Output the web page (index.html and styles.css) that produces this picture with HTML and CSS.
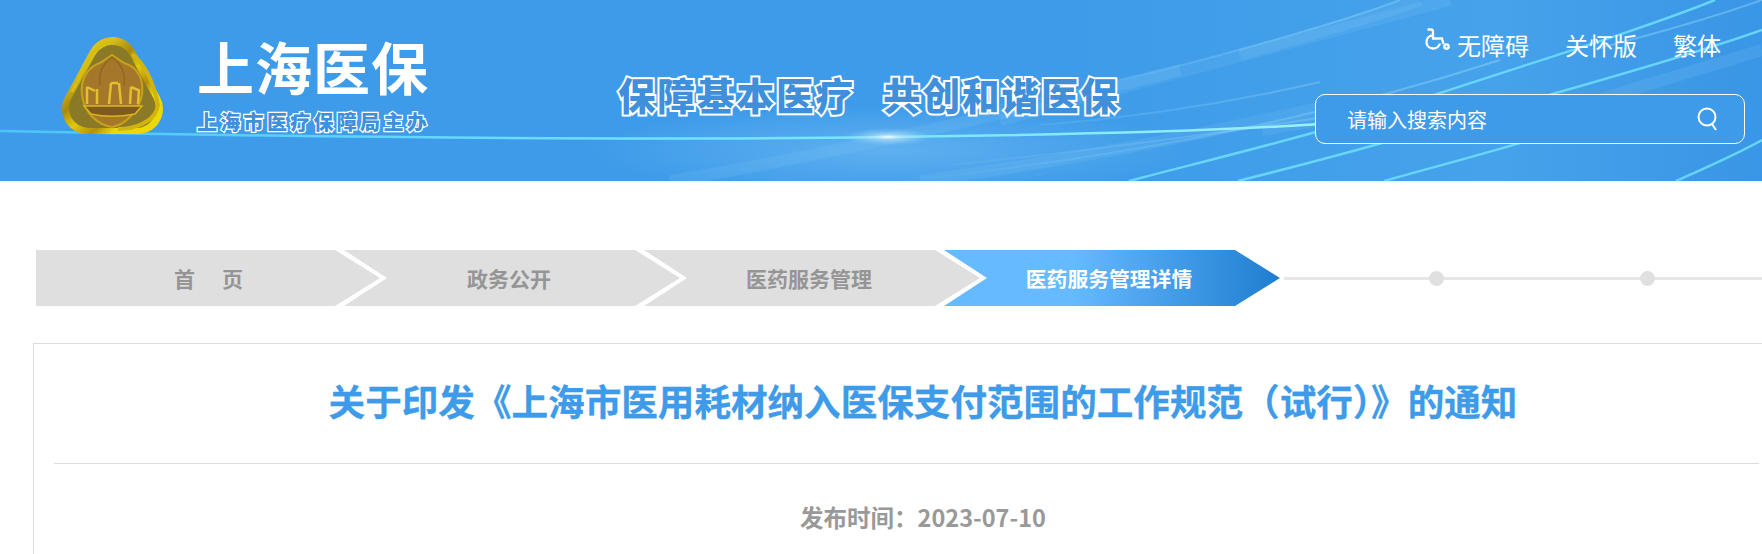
FILE: index.html
```html
<!DOCTYPE html>
<html lang="zh-CN">
<head>
    <meta charset="utf-8">
    <title>上海医保</title>
    <link rel="stylesheet" href="styles.css">
</head>
<body>

<div class="header">
    <svg class="streaks" viewBox="0 0 1762 181" preserveAspectRatio="none">
        <defs>
            <linearGradient id="sheen" x1="0" y1="0" x2="1" y2="0">
                <stop offset="0" stop-color="#3e9be9"/>
                <stop offset="0.6" stop-color="#3e9be9"/>
                <stop offset="0.85" stop-color="#46a2ea"/>
                <stop offset="1" stop-color="#3a96e6"/>
            </linearGradient>
            <radialGradient id="flare">
                <stop offset="0" stop-color="#fff" stop-opacity="0.95"/>
                <stop offset="0.25" stop-color="#cdeeff" stop-opacity="0.6"/>
                <stop offset="1" stop-color="#8fd0fa" stop-opacity="0"/>
            </radialGradient>
            <radialGradient id="haze">
                <stop offset="0" stop-color="#8fd0fa" stop-opacity="0.4"/>
                <stop offset="1" stop-color="#8fd0fa" stop-opacity="0"/>
            </radialGradient>
            <linearGradient id="beam" x1="0" y1="0" x2="1" y2="0">
                <stop offset="0" stop-color="#4cc4f7"/>
                <stop offset="0.5" stop-color="#6fe3ff"/>
                <stop offset="0.75" stop-color="#7ee8fb"/>
                <stop offset="1" stop-color="#9df0fb"/>
            </linearGradient>
            <linearGradient id="fade" gradientUnits="userSpaceOnUse" x1="850" y1="0" x2="1450" y2="0">
                <stop offset="0" stop-color="#a8e6fb" stop-opacity="0"/>
                <stop offset="1" stop-color="#a8e6fb" stop-opacity="1"/>
            </linearGradient>
        </defs>
        <rect width="1762" height="181" fill="url(#sheen)"/>
        <ellipse cx="888" cy="150" rx="300" ry="45" fill="url(#haze)"/>
        <path class="soft" d="M670 181 C800 160 960 125 1180 70"/>
        <path class="soft" d="M920 181 C1040 165 1180 140 1330 105"/>
        <path class="soft" d="M1000 120 C1150 80 1280 45 1450 0"/>
        <path class="soft" d="M1240 55 C1310 35 1370 18 1420 0"/>
        <path class="soft" d="M1500 130 C1580 105 1680 75 1762 50"/>
        <path class="soft" d="M1262 130 L1320 120"/>
        <path class="thin" d="M900 181 C1100 160 1300 125 1500 60"/>
        <path class="thin" d="M950 165 C1100 150 1280 125 1400 105"/>
        <path class="thin" d="M1000 105 C1120 85 1320 30 1400 0"/>
        <path class="thin" d="M1040 125 C1130 118 1220 105 1320 82"/>
        <path class="bright" d="M1129 181 C1190 165 1260 148 1330 128"/>
        <path class="bright" d="M1238 181 C1290 168 1340 155 1400 138"/>
        <path class="bright" d="M1384 181 C1430 168 1480 155 1530 140"/>
        <path class="bright" d="M1676 181 C1705 168 1735 155 1762 140"/>
        <path class="bright" d="M1549 95 C1620 75 1700 52 1762 30"/>
        <path class="bright" d="M1434 95 C1540 60 1640 30 1715 0"/>
        <path class="thin" d="M1600 48 C1650 35 1720 15 1762 0"/>
        <path d="M0 131 C300 137 600 141 888 137 C1060 135 1200 132 1320 124" stroke="url(#beam)" stroke-width="2.5" fill="none"/>
        <ellipse cx="888" cy="137" rx="46" ry="9" fill="url(#flare)"/>
    </svg>

    <svg class="logo" viewBox="0 0 101 97">
        <defs>
            <linearGradient id="gold" x1="0" y1="0" x2="1" y2="1">
                <stop offset="0" stop-color="#d9c21e"/>
                <stop offset="0.3" stop-color="#a98a0c"/>
                <stop offset="0.55" stop-color="#e3c80a"/>
                <stop offset="0.8" stop-color="#b58f10"/>
                <stop offset="1" stop-color="#ecd805"/>
            </linearGradient>
        </defs>
        <polygon points="50.5,25 25,72 76,72" fill="url(#gold)" stroke="url(#gold)" stroke-width="50" stroke-linejoin="round"/>
        <polygon points="50.5,28 27,71 74,71" fill="#8a7a28" stroke="#8a7a28" stroke-width="40" stroke-linejoin="round"/>
        <path d="M50 5 C38 5 32 14 26 24 L10 55" stroke="#d8bd12" stroke-width="3" fill="none"/>
        <path d="M70 17 C84 28 92 48 96 68 C94 84 74 92 56 92" stroke="#d2b40e" stroke-width="4" fill="none"/>
        <path d="M50 18 L62 26 C76 30 82 42 80 58 C76 76 62 88 50 90 C36 88 22 76 20 58 C18 42 26 30 38 26 Z" fill="#a5772a" stroke="#c9a019" stroke-width="2"/>
        <path d="M50 20 C58 26 64 34 62 48 M50 20 C42 26 36 34 38 48" stroke="#8d6420" stroke-width="1.2" fill="none"/>
        <g class="sails">
            <path d="M25 50 L25 67 M35 52 L35 67 M49 46 L47 67 M57 46 L59 67 M69 50 L68 67 M77 52 L76 67"/>
            <path d="M25 50 L33 54 M49 46 L56 46 M69 50 L76 53"/>
        </g>
        <path d="M22 69 L80 69 L73 77 C58 80 42 80 29 77 Z" fill="#7f5a1c" stroke="#d9b81d" stroke-width="1.5"/>
    </svg>

    <div class="brand">
        <div class="brand-name">上海医保</div>
        <div class="brand-sub">上海市医疗保障局主办</div>
    </div>

    <div class="slogan">
        <span>保障基本医疗</span>
        <span>共创和谐医保</span>
    </div>

    <div class="tools">
        <div class="tool-links">
            <a class="tool-link tool-access">
                <svg class="icon-access" viewBox="0 0 25 24">
                    <path d="M2.5 1.5 L6 1.5 C7.5 1.5 8 2.5 8 4 L8 10.5 L17 10.5 L18.5 16 M8 7.5 C4 7.5 1.5 10.5 1.5 14 C1.5 18 4.5 20.5 8 20.5 C11.5 20.5 14 18.5 15 15.5"/>
                    <circle cx="21.5" cy="18.5" r="2.2"/>
                </svg>
                无障碍
            </a>
            <a class="tool-link">关怀版</a>
            <a class="tool-link">繁体</a>
        </div>
        <div class="search">
            <span class="search-text">请输入搜索内容</span>
            <svg class="icon-search" viewBox="0 0 20 24">
                <circle cx="10" cy="10" r="8.5"/>
                <path d="M15 17 L19 23"/>
            </svg>
        </div>
    </div>
</div>

<div class="crumbs">
    <a class="crumb crumb-first">首　页</a>
    <a class="crumb">政务公开</a>
    <a class="crumb">医药服务管理</a>
    <a class="crumb crumb-active">医药服务管理详情</a>
    <div class="rail">
        <span class="rail-dot"></span>
        <span class="rail-dot"></span>
    </div>
</div>

<div class="card">
    <h1 class="card-title">关于印发《上海市医用耗材纳入医保支付范围的工作规范（试行）》的通知</h1>
    <div class="card-rule"></div>
    <div class="card-date">发布时间：2023-07-10</div>
</div>

</body>
</html>
```

FILE: styles.css
```css
html, body {
    margin: 0;
    height: 554px;
    overflow: hidden;
    background: #fff;
    font-family: "Noto Sans CJK SC", "Liberation Sans", sans-serif;
}

/* top banner */
.header {
    position: relative;
    display: flex;
    align-items: flex-start;
    height: 181px;
    padding-left: 62px;
    background: #3e9be9;
}

.streaks {
    position: absolute;
    left: 0;
    top: 0;
    width: 100%;
    height: 100%;
}

.streaks path {
    fill: none;
}

.streaks .soft {
    stroke: #8fd3f7;
    stroke-width: 12;
    opacity: 0.14;
}

.streaks .thin {
    stroke: url(#fade);
    stroke-width: 2;
    opacity: 0.35;
}

.streaks .bright {
    stroke: #6fe4fb;
    stroke-width: 2.5;
    opacity: 0.8;
}

.logo {
    position: relative;
    flex: none;
    width: 101px;
    height: 97px;
    margin-top: 37px;
}

.sails path {
    fill: none;
    stroke: #e0c030;
    stroke-width: 2.5;
}

.brand {
    position: relative;
    flex: none;
    width: 240px;
    margin: 25px 0 0 34px;
    color: #fff;
}

.brand-name {
    font-size: 57px;
    font-weight: 700;
    line-height: 80px;
    letter-spacing: 1px;
}

.brand-sub {
    margin-top: 4px;
    font-size: 20px;
    font-weight: 900;
    line-height: 26px;
    letter-spacing: 3.3px;
    color: #3f8fdb;
    -webkit-text-stroke: 2.5px #fff;
    paint-order: stroke fill;
}

.slogan {
    position: relative;
    flex: none;
    display: flex;
    gap: 28px;
    margin: 66px 0 0 181px;
    font-size: 37.5px;
    font-weight: 900;
    line-height: 56px;
    letter-spacing: 2px;
    color: #3f8fdb;
    -webkit-text-stroke: 4px #fff;
    paint-order: stroke fill;
    text-shadow: 0 0 3px rgba(255, 255, 255, 0.6);
}

/* links + search */
.tools {
    position: relative;
    margin-left: auto;
    padding: 26px 17px 0 0;
    width: 430px;
}

.tool-links {
    display: flex;
    justify-content: flex-end;
    align-items: center;
    gap: 36px;
    padding-right: 24px;
    height: 36px;
    color: #fff;
    font-size: 24px;
}

.tool-link {
    display: flex;
    align-items: center;
}

.icon-access {
    width: 25px;
    height: 24px;
    margin: -8px 7px 0 0;
    fill: none;
    stroke: #fff;
    stroke-width: 2.3;
}

.search {
    display: flex;
    align-items: center;
    justify-content: space-between;
    box-sizing: border-box;
    height: 50px;
    margin-top: 32px;
    padding: 0 27px 0 31px;
    background: #3e9be9;
    border: 1px solid #fff;
    border-radius: 10px;
}

.search-text {
    color: #fff;
    font-size: 20px;
}

.icon-search {
    width: 20px;
    height: 24px;
    fill: none;
    stroke: #fff;
    stroke-width: 2;
}

/* breadcrumb arrows */
.crumbs {
    display: flex;
    height: 56px;
    margin: 69px 0 0 36px;
}

.crumb {
    flex: none;
    display: flex;
    align-items: center;
    justify-content: center;
    box-sizing: border-box;
    width: 336px;
    margin-left: -36px;
    padding-right: 6px;
    background: #dfdfdf;
    color: #959595;
    font-size: 21px;
    font-weight: 700;
    clip-path: polygon(0 0, calc(100% - 45px) 0, 100% 50%, calc(100% - 45px) 100%, 0 100%, 43px 50%);
}

.crumb-first {
    width: 344px;
    margin-left: 0;
    padding: 0 0 0 4px;
    letter-spacing: 3px;
    clip-path: polygon(0 0, calc(100% - 45px) 0, 100% 50%, calc(100% - 45px) 100%, 0 100%);
}

.crumb-active {
    background: linear-gradient(90deg, #66baff 0, #66baff 38%, #1f7dd0 100%);
    color: #fff;
    font-size: 20.8px;
}

.rail {
    flex: 1;
    display: flex;
    align-items: center;
    gap: 196px;
    margin-left: 4px;
    padding-left: 145px;
    background: linear-gradient(#e6e6e6, #e6e6e6) 0 50% / 100% 3px no-repeat;
}

.rail-dot {
    flex: none;
    width: 15px;
    height: 15px;
    border-radius: 50%;
    background: #e0e0e0;
}

/* article */
.card {
    box-sizing: border-box;
    width: 1800px;
    height: 400px;
    margin: 37px 0 0 33px;
    padding: 27px 0 0 20px;
    border: 1px solid #ddd;
}

.card-title {
    width: 1738px;
    margin: 0;
    font-size: 36.6px;
    font-weight: 700;
    line-height: 60px;
    text-align: center;
    color: #3e9be9;
    -webkit-text-stroke: 0.3px #3e9be9;
}

.card-rule {
    width: 1705px;
    height: 1px;
    margin-top: 32px;
    background: #ddd;
}

.card-date {
    width: 1738px;
    margin-top: 33px;
    font-size: 23.5px;
    font-weight: 700;
    line-height: 40px;
    text-align: center;
    color: #999;
}
```
